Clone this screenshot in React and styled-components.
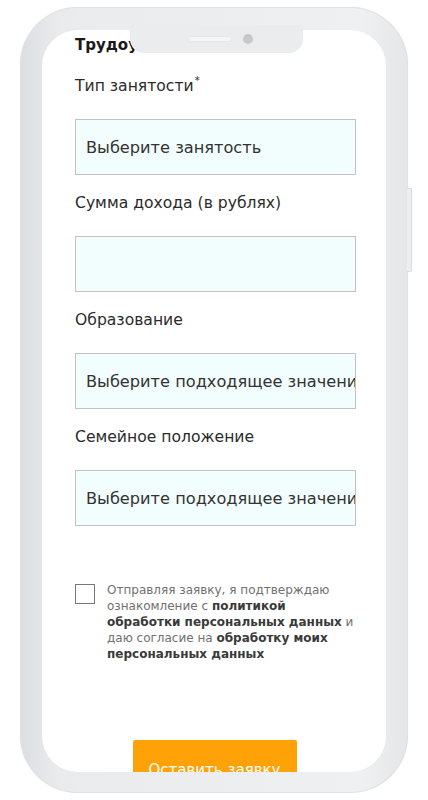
import React from "react";
import styled, { createGlobalStyle } from "styled-components";

const GlobalStyle = createGlobalStyle`
  html, body {
    margin: 0;
    padding: 0;
    background: #ffffff;
  }
  body {
    font-family: "DejaVu Sans", "Open Sans", sans-serif;
    color: #333;
  }
`;

// корпус телефона
const Device = styled.div`
  position: relative;
  margin: 7px 0 0 20px;
  width: 388px;
  height: 786px;
  box-sizing: border-box;
  padding: 23px 22px 21px 22px;
  border-radius: 58px;
  background: linear-gradient(90deg, #dcdfe2 0%, #e9ebed 10%, #eef0f1 88%, #e4e6e8 100%);
  box-shadow: inset 0 0 0 1px #dfe1e3, 0 0 1px rgba(0, 0, 0, 0.15);
`;

const SideButton = styled.div`
  position: absolute;
  right: -4px;
  top: ${(p) => p.top}px;
  width: 4px;
  height: ${(p) => p.h}px;
  border-radius: 0 2px 2px 0;
  background: #eceef0;
  border: 1px solid #dadcde;
  border-left: none;
`;

const Notch = styled.div`
  position: absolute;
  left: 110px;
  top: 18px;
  width: 173px;
  height: 28px;
  border-radius: 0 0 14px 14px;
  background: #eaecee;
  display: flex;
  align-items: center;
  justify-content: center;
  gap: 12px;
  z-index: 2;
`;

const Speaker = styled.div`
  width: 42px;
  height: 4px;
  border-radius: 2px;
  margin-left: 8px;
  background: #f5f6f7;
  box-shadow: 0 0 2px rgba(0, 0, 0, 0.08);
`;

const Camera = styled.div`
  width: 10px;
  height: 10px;
  border-radius: 50%;
  background: #c6c9cc;
`;

const Screen = styled.div`
  height: 100%;
  border-radius: 36px;
  background: #ffffff;
  overflow: hidden;
  box-sizing: border-box;
  padding: 5px 30px 0 33px;
  display: flex;
  flex-direction: column;
`;

const Heading = styled.div`
  font-size: 15px;
  line-height: 20px;
  font-weight: 700;
  color: #1a1a1a;
`;

const Field = styled.div`
  display: flex;
  flex-direction: column;
  margin-top: ${(p) => p.first ? 21 : 18}px;
`;

const Label = styled.div`
  font-size: 15.6px;
  line-height: 20px;
  color: #2b2b2b;
  margin-bottom: 23px;

  sup {
    font-size: 10px;
    vertical-align: top;
    position: relative;
    top: -5px;
    margin-left: 1px;
  }
`;

const Input = styled.div`
  height: 56px;
  width: 281px;
  box-sizing: border-box;
  border: 1px solid #bfc3c4;
  background: #f2fdfd;
  padding: 0 10px;
  display: flex;
  align-items: center;
  font-size: 16.2px;
  color: #333;
  white-space: nowrap;
  overflow: hidden;
`;

const Divider = styled.div`
  margin: 20px 4px 0 7px;
  height: 1px;
  background: #dcdcdc;
  box-shadow: 0 1px 2px rgba(0, 0, 0, 0.08);
`;

const Consent = styled.div`
  display: flex;
  gap: 12px;
  margin-top: 38px;
`;

const Checkbox = styled.div`
  flex: none;
  width: 20px;
  height: 20px;
  box-sizing: border-box;
  border: 1.5px solid #777;
  background: #fff;
`;

const ConsentText = styled.div`
  font-size: 12px;
  line-height: 16px;
  color: #707070;
  margin: -2px -8px 0 0;
  white-space: nowrap;

  b {
    color: #3a3a3a;
  }
`;

const Submit = styled.button`
  align-self: center;
  margin-top: 78px;
  margin-left: -2px;
  width: 164px;
  height: 60px;
  flex: none;
  border: none;
  border-radius: 2px;
  background: #ffa208;
  color: #ffffff;
  font-family: inherit;
  font-size: 15px;
`;

export default function App() {
  return (
    <>
      <GlobalStyle />
      <Device>
        <SideButton top={181} h={82} />
        <Notch>
          <Speaker />
          <Camera />
        </Notch>
        <Screen>
          <Heading>Трудоустройство</Heading>
          <Field first>
            <Label>
              Тип занятости<sup>*</sup>
            </Label>
            <Input>Выберите занятость</Input>
          </Field>
          <Field>
            <Label>Сумма дохода (в рублях)</Label>
            <Input />
          </Field>
          <Field>
            <Label>Образование</Label>
            <Input>Выберите подходящее значение</Input>
          </Field>
          <Field>
            <Label>Семейное положение</Label>
            <Input>Выберите подходящее значение</Input>
          </Field>
          <Divider />
          <Consent>
            <Checkbox />
            <ConsentText>
              Отправляя заявку, я подтверждаю
              <br />
              ознакомление с <b>политикой</b>
              <br />
              <b>обработки персональных данных</b> и
              <br />
              даю согласие на <b>обработку моих</b>
              <br />
              <b>персональных данных</b>
            </ConsentText>
          </Consent>
          <Submit>Оставить заявку</Submit>
        </Screen>
      </Device>
    </>
  );
}
